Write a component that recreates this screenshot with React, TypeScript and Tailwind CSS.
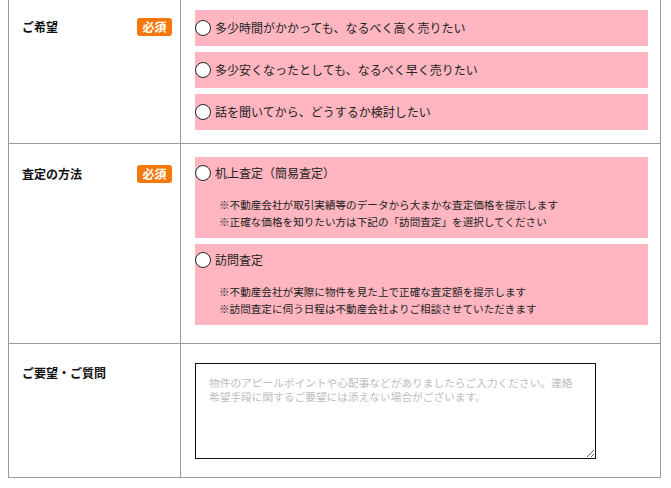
const hopes = [
  "多少時間がかかっても、なるべく高く売りたい",
  "多少安くなったとしても、なるべく早く売りたい",
  "話を聞いてから、どうするか検討したい",
];

const methods = [
  {
    title: "机上査定（簡易査定）",
    notes: [
      "※不動産会社が取引実績等のデータから大まかな査定価格を提示します",
      "※正確な価格を知りたい方は下記の「訪問査定」を選択してください",
    ],
  },
  {
    title: "訪問査定",
    notes: [
      "※不動産会社が実際に物件を見た上で正確な査定額を提示します",
      "※訪問査定に伺う日程は不動産会社よりご相談させていただきます",
    ],
  },
];

const Radio = () => (
  <span className="w-[16px] h-[16px] rounded-full border-[1.5px] border-[#222] bg-white shrink-0" />
);

const Required = () => (
  <span className="w-[35px] h-[18px] rounded-[3px] bg-[#f5780a] text-white text-[12px] font-bold flex items-center justify-center leading-none">
    必須
  </span>
);

const Label = ({ text, required, h }: { text: string; required?: boolean; h: string }) => (
  <div className={`flex items-center justify-between ${h}`}>
    <span className="text-[12px] font-bold text-[#111]">{text}</span>
    {required ? <Required /> : null}
  </div>
);

export default function App() {
  return (
    <div className="min-h-screen bg-white pl-[8px] font-['Noto_Sans_CJK_JP',sans-serif] text-[#222]">
      <div className="w-[653px] -mt-[4px] border-l border-r border-b border-[#9a9a9a]">
        {/* ご希望 */}
        <div className="flex border-t border-[#9a9a9a]">
          <div className="w-[172px] shrink-0 border-r border-[#9a9a9a] pl-[13px] pr-[8px] pt-[12px]">
            <Label text="ご希望" required h="h-[36px]" />
          </div>
          <div className="flex-1 pl-[14px] pr-[12px] pt-[13px] pb-[13px] flex flex-col gap-[6px]">
            {hopes.map((h) => (
              <label key={h} className="h-[36px] bg-[#ffb6c1] flex items-center gap-[4px] text-[12px]">
                <Radio />
                <span>{h}</span>
              </label>
            ))}
          </div>
        </div>

        {/* 査定の方法 */}
        <div className="flex border-t border-[#9a9a9a]">
          <div className="w-[172px] shrink-0 border-r border-[#9a9a9a] pl-[13px] pr-[8px] pt-[20px]">
            <Label text="査定の方法" required h="h-[20px]" />
          </div>
          <div className="flex-1 pl-[14px] pr-[12px] pt-[13px] pb-[18px] flex flex-col gap-[6px]">
            {methods.map((m) => (
              <div key={m.title} className="bg-[#ffb6c1] pt-[6px] pb-[8px]">
                <label className="h-[20px] flex items-center gap-[4px] text-[12px]">
                  <Radio />
                  <span>{m.title}</span>
                </label>
                <div className="mt-[13px] pl-[24px] text-[10.6px] leading-[17px]">
                  {m.notes.map((n) => (
                    <p key={n}>{n}</p>
                  ))}
                </div>
              </div>
            ))}
          </div>
        </div>

        {/* ご要望・ご質問 */}
        <div className="flex border-t border-[#9a9a9a]">
          <div className="w-[172px] shrink-0 border-r border-[#9a9a9a] pl-[13px] pr-[8px] pt-[19px]">
            <Label text="ご要望・ご質問" h="h-[20px]" />
          </div>
          <div className="flex-1 pl-[14px] pr-[12px] pt-[19px] pb-[18px]">
            <textarea
              className="block w-[401px] h-[96px] border border-[#111] bg-white pt-[12px] pb-[12px] pl-[13px] pr-[15px] text-[10.7px] leading-[14px] text-[#333] placeholder:text-[#bdbdbd] outline-none"
              placeholder="物件のアピールポイントや心配事などがありましたらご入力ください。連絡希望手段に関するご要望には添えない場合がございます。"
            />
          </div>
        </div>
      </div>
    </div>
  );
}
